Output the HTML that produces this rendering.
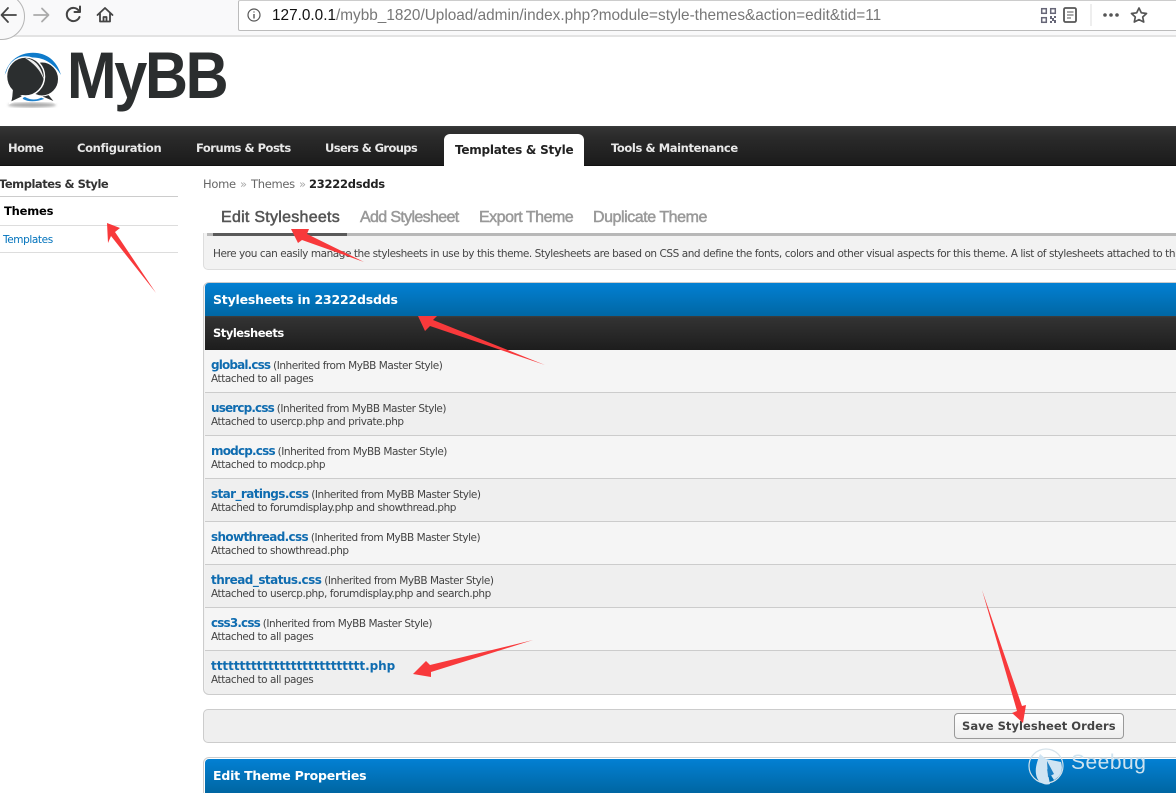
<!DOCTYPE html>
<html><head><meta charset="utf-8"><title>MyBB</title>
<style>
html,body{margin:0;padding:0;background:#fff}
#p{position:relative;width:1176px;height:793px;overflow:hidden;background:#fff;font-family:"DejaVu Sans","Liberation Sans",sans-serif;font-size:10.5px;color:#333}
#p div{position:absolute;white-space:nowrap}
.nav{color:#e8e8e8;font-weight:bold;font-size:11.5px;top:141px;letter-spacing:-.35px;line-height:15px}
.rowb{left:205px;width:971px;height:42px;border-bottom:1px solid #ccc}
.t{left:211px;line-height:14px;font-size:10.5px;color:#444;letter-spacing:-.47px}
.t b{font-size:12px;color:#0f6cb0;letter-spacing:-.85px}
.s{left:211px;line-height:14px;font-size:10.5px;color:#444;letter-spacing:-.45px}
.tab{top:208px;font-size:16px;font-family:"Liberation Sans",sans-serif;line-height:20px;color:#999;-webkit-text-stroke:.5px #999}
.bc{top:177px;font-size:11.5px;line-height:15px;color:#666;letter-spacing:-.3px}
</style></head><body><div id="p">

<div style="left:0;top:0;width:1176px;height:35px;background:#f9f9fa;border-bottom:2px solid #e3e3e3"></div>
<div style="left:-22px;top:-7px;width:45px;height:45px;border:1px solid #b5b5b5;border-radius:50%;background:#f9f9fa"></div>
<svg style="position:absolute;left:0;top:0" width="125" height="32" fill="none" stroke-linecap="round" stroke-linejoin="round">
<path d="M2 15H16M8 8L1.500 15L8 22" stroke="#444" stroke-width="1.800"/>
<path d="M34 15H48M42 8.500L48.500 15L42 21.500" stroke="#aaa" stroke-width="1.800"/>
<path d="M79 11A6.600 6.600 0 1 0 79.500 17" stroke="#444" stroke-width="2"/>
<path d="M80 6.500V12H74.500" stroke="#444" stroke-width="2"/>
<path d="M97.500 15L105 8L112.500 15M100 13.500V21.500H110V13.500M103.500 21.500V17H106.500V21.500" stroke="#444" stroke-width="1.800"/>
</svg>

<div style="left:238px;top:0;width:1014px;height:29px;background:#fff;border:1px solid #bcbcbc;border-top:1px solid #ccc;border-radius:2px"></div>
<svg style="position:absolute;left:246px;top:7px" width="17" height="17" fill="none"><circle cx="8" cy="8" r="6" stroke="#555" stroke-width="1.200"/><path d="M8 7V11.500M8 4.500V5.500" stroke="#555" stroke-width="1.400"/></svg>
<div style="left:272px;top:7px;font:15.35px/18px 'Liberation Sans',sans-serif;color:#777"><span style="color:#111">127.0.0.1</span>/mybb_1820/Upload/admin/index.php?module=style-themes&amp;action=edit&amp;tid=11</div>
<svg style="position:absolute;left:1035px;top:0" width="125" height="30" fill="none">
<g stroke="#667" stroke-width="1.500"><rect x="6.700" y="8.700" width="4.600" height="4.600"/><rect x="15.700" y="8.700" width="4.600" height="4.600"/><rect x="6.700" y="17.700" width="4.600" height="4.600"/></g>
<path d="M15 16h2v2h2v-2h2v2h-2v2h2v3h-2v-2h-2v2h-2v-2h2v-2h-2z" fill="#667"/>
<rect x="29" y="8" width="12" height="14" rx="1.500" stroke="#555" stroke-width="1.800"/><path d="M32 12h6.500M32 15h6.500M32 18h4" stroke="#555" stroke-width="1"/>
<path d="M56 4V26" stroke="#ddd"/>
<g fill="#555"><circle cx="70" cy="15" r="1.800"/><circle cx="76" cy="15" r="1.800"/><circle cx="82" cy="15" r="1.800"/></g>
<path d="M104 8L106.300 12.800L111.500 13.500L107.700 17L108.700 22L104 19.600L99.300 22L100.300 17L96.500 13.500L101.700 12.800Z" stroke="#555" stroke-width="1.700" stroke-linejoin="round"/>
</svg>

<svg style="position:absolute;left:0;top:45px" width="66" height="68">
<defs><filter id="bl"><feGaussianBlur stdDeviation="1.200"/></filter></defs>
<ellipse cx="32" cy="60" rx="24" ry="2.500" fill="#aaa" filter="url(#bl)"/>
<path d="M4.700 30C8 15 20 7.700 33 7.700C47 7.700 57 16 61 30C55 20 45 12.500 33 12.500C20 12 10 18 4.700 30Z" fill="#0f7bcb"/>
<path d="M22 50C30 56 38 56 45 50L44 54C36 57 28 57 23 54Z" fill="#1d80cc"/>
<path d="M47 47L56 58L37 50Z" fill="#2b2e2f" stroke="#fff" stroke-width="1.500"/>
<ellipse cx="42" cy="34" rx="16.500" ry="17" fill="#2b2e2f" stroke="#fff" stroke-width="1"/>
<path d="M13 46L10 58L27 50Z" fill="#2b2e2f" stroke="#fff" stroke-width="1.800"/>
<ellipse cx="25.500" cy="31.500" rx="19" ry="19.500" fill="#2b2e2f" stroke="#fff" stroke-width="1.500"/>
<path d="M13 44L12 55L26 48Z" fill="#2b2e2f"/>
<path d="M25 13C35 14 42 22 44 35C40 24 33 18 25 13Z" fill="#eee"/>
</svg>
<div style="left:67px;top:35px;font:bold 66px/80px 'Liberation Sans',sans-serif;color:#2b2e2f;letter-spacing:-2.600px;transform:scaleX(.902);transform-origin:0 0">MyBB</div>

<div style="left:0;top:126px;width:1176px;height:40px;background:linear-gradient(#3a3d3d 0,#333 2px,#2a2a2a 12px,#1b1b1b 100%);border-bottom:1px solid #111;box-sizing:border-box"></div>
<div class="nav" style="left:8px;letter-spacing:-.5px">Home</div>
<div class="nav" style="left:77px">Configuration</div>
<div class="nav" style="left:196px;letter-spacing:-.49px">Forums &amp; Posts</div>
<div class="nav" style="left:325px;letter-spacing:-.62px">Users &amp; Groups</div>
<div style="left:444px;top:134px;width:140px;height:32px;background:#fff;border-radius:6px 6px 0 0"></div>
<div class="nav" style="left:455px;top:143px;color:#222;font-size:12px;letter-spacing:-.23px">Templates &amp; Style</div>
<div class="nav" style="left:611px;letter-spacing:-.4px">Tools &amp; Maintenance</div>

<div style="left:-1px;top:177px;font-weight:bold;font-size:11.500px;line-height:15px;color:#333;letter-spacing:-.47px">Templates &amp; Style</div>
<div style="left:0;top:196px;width:178px;height:1px;background:#ccc"></div>
<div style="left:4px;top:204px;font-weight:bold;font-size:11.500px;line-height:15px;color:#000;letter-spacing:-.2px">Themes</div>
<div style="left:0;top:225px;width:178px;height:1px;background:#ddd"></div>
<div style="left:3px;top:233px;font-size:10.5px;line-height:14px;color:#0072bc;letter-spacing:-.4px">Templates</div>
<div style="left:0;top:252px;width:178px;height:1px;background:#ddd"></div>

<div class="bc" style="left:203px">Home</div>
<div class="bc" style="left:240px;color:#aaa">»</div>
<div class="bc" style="left:251px">Themes</div>
<div class="bc" style="left:299px;color:#aaa">»</div>
<div class="bc" style="left:309px;color:#222;font-weight:bold;letter-spacing:-.25px">23222dsdds</div>

<div class="tab" style="left:221px;color:#555;-webkit-text-stroke:.5px #555;letter-spacing:.27px">Edit Stylesheets</div>
<div class="tab" style="left:360px;letter-spacing:-.65px">Add Stylesheet</div>
<div class="tab" style="left:479px;letter-spacing:-.5px">Export Theme</div>
<div class="tab" style="left:593px;letter-spacing:-.45px">Duplicate Theme</div>

<div style="left:203px;top:233px;width:980px;height:37px;background:#f2f2f2;border:1px solid #ddd;border-top:0;border-radius:0 0 5px 5px;box-sizing:border-box"></div>
<div style="left:207px;top:233px;width:973px;height:3px;background:#b8b8b8"></div>
<div style="left:213px;top:233px;width:134px;height:3px;background:#5a5a5a"></div>
<div style="left:213px;top:247px;font-size:10.5px;line-height:14px;color:#444;letter-spacing:-.45px">Here you can easily manage the stylesheets in use by this theme. Stylesheets are based on CSS and define the fonts, colors and other visual aspects for this theme. A list of stylesheets attached to this theme is below.</div>

<div style="left:203px;top:282px;width:1000px;height:413px;border:1px solid #ccc;border-radius:6px;box-sizing:border-box;background:#f2f2f2"></div>
<div style="left:205px;top:283px;width:975px;height:34px;background:linear-gradient(#0380d3,#0066a2);border-radius:4px 0 0 0"></div>
<div style="left:213px;top:292px;font-weight:bold;font-size:12.500px;line-height:16px;color:#fff;letter-spacing:-.2px">Stylesheets in 23222dsdds</div>
<div style="left:205px;top:316px;width:975px;height:34px;background:linear-gradient(#3d3f3f 0,#333 2px,#1d1d1d 100%)"></div>
<div style="left:213px;top:326px;font-weight:bold;font-size:11.500px;line-height:15px;color:#fff;letter-spacing:-.48px">Stylesheets</div>

<div class="rowb" style="top:350px;background:#f5f5f5"></div>
<div class="rowb" style="top:393px;background:#efefef"></div>
<div class="rowb" style="top:436px;background:#f5f5f5"></div>
<div class="rowb" style="top:479px;background:#efefef"></div>
<div class="rowb" style="top:522px;background:#f5f5f5"></div>
<div class="rowb" style="top:565px;background:#efefef"></div>
<div class="rowb" style="top:608px;background:#f5f5f5"></div>
<div style="left:205px;top:651px;width:975px;height:43px;background:#efefef;border-radius:0 0 0 5px"></div>

<div class="t" style="top:358px"><b>global.css</b> (Inherited from MyBB Master Style)</div><div class="s" style="top:372px">Attached to all pages</div>
<div class="t" style="top:401px"><b>usercp.css</b> (Inherited from MyBB Master Style)</div><div class="s" style="top:415px">Attached to usercp.php and private.php</div>
<div class="t" style="top:444px"><b style="letter-spacing:-.8px">modcp.css</b> (Inherited from MyBB Master Style)</div><div class="s" style="top:458px">Attached to modcp.php</div>
<div class="t" style="top:487px"><b style="letter-spacing:-.6px">star_ratings.css</b> (Inherited from MyBB Master Style)</div><div class="s" style="top:501px">Attached to forumdisplay.php and showthread.php</div>
<div class="t" style="top:530px"><b style="letter-spacing:-.64px">showthread.css</b> (Inherited from MyBB Master Style)</div><div class="s" style="top:544px">Attached to showthread.php</div>
<div class="t" style="top:573px"><b style="letter-spacing:-.53px">thread_status.css</b> (Inherited from MyBB Master Style)</div><div class="s" style="top:587px">Attached to usercp.php, forumdisplay.php and search.php</div>
<div class="t" style="top:616px"><b>css3.css</b> (Inherited from MyBB Master Style)</div><div class="s" style="top:630px">Attached to all pages</div>
<div class="t" style="top:659px"><b style="letter-spacing:-.03px">ttttttttttttttttttttttttttt.php</b></div><div class="s" style="top:673px">Attached to all pages</div>

<div style="left:203px;top:709px;width:1000px;height:34px;background:#efefef;border:1px solid #ccc;border-radius:5px;box-sizing:border-box"></div>
<div style="left:954px;top:713px;width:170px;height:26px;box-sizing:border-box;border:1px solid #999;border-radius:4px;background:linear-gradient(#fff,#eee)"></div>
<div style="left:962px;top:719px;font-weight:bold;font-size:11.500px;line-height:15px;color:#444;letter-spacing:.05px">Save Stylesheet Orders</div>

<div style="left:203px;top:757px;width:1000px;height:60px;border:1px solid #ccc;border-radius:6px;box-sizing:border-box;background:#fff"></div>
<div style="left:205px;top:759px;width:975px;height:34px;background:linear-gradient(#0380d3,#0066a2);border-radius:4px 0 0 0"></div>
<div style="left:213px;top:768px;font-weight:bold;font-size:12.500px;line-height:16px;color:#fff;letter-spacing:-.2px">Edit Theme Properties</div>

<svg style="position:absolute;left:0;top:0" width="1176" height="793" fill="#f8393b">
<path d="M107 223L120 228L115 232L156 293L111 236L108 243Z"/>
<path d="M291 229L309 229L307 234L364 262L302 240L298 243Z"/>
<path d="M418 316L437 316L433 320L545 365L430 326L425 331Z"/>
<path d="M413 674L426 661L430 665L533 640L431 672L431 677Z"/>
<path d="M982 590L1022 706L1026 705L1023 723L1012 713L1017 711Z"/>
</svg>

<svg style="position:absolute;left:1028px;top:746px" width="40" height="42" fill="none">
<circle cx="18" cy="20" r="17" stroke="#d5e2ea" stroke-width="1.200"/>
<path d="M12 8L18 13L33 16C36 26 31 31 26 34L19 23L22 38C16 40 9 36 8 28C7 22 9 16 12 8Z" fill="#cfe4f3"/>
<path d="M19 15L26 28L20 31Z" fill="#1b7fc4"/>
</svg>
<div style="left:1071px;top:751px;font:21px/24px 'Liberation Sans',sans-serif;color:#cfe3ef;letter-spacing:.5px">Seebug</div>
</div></body></html>
